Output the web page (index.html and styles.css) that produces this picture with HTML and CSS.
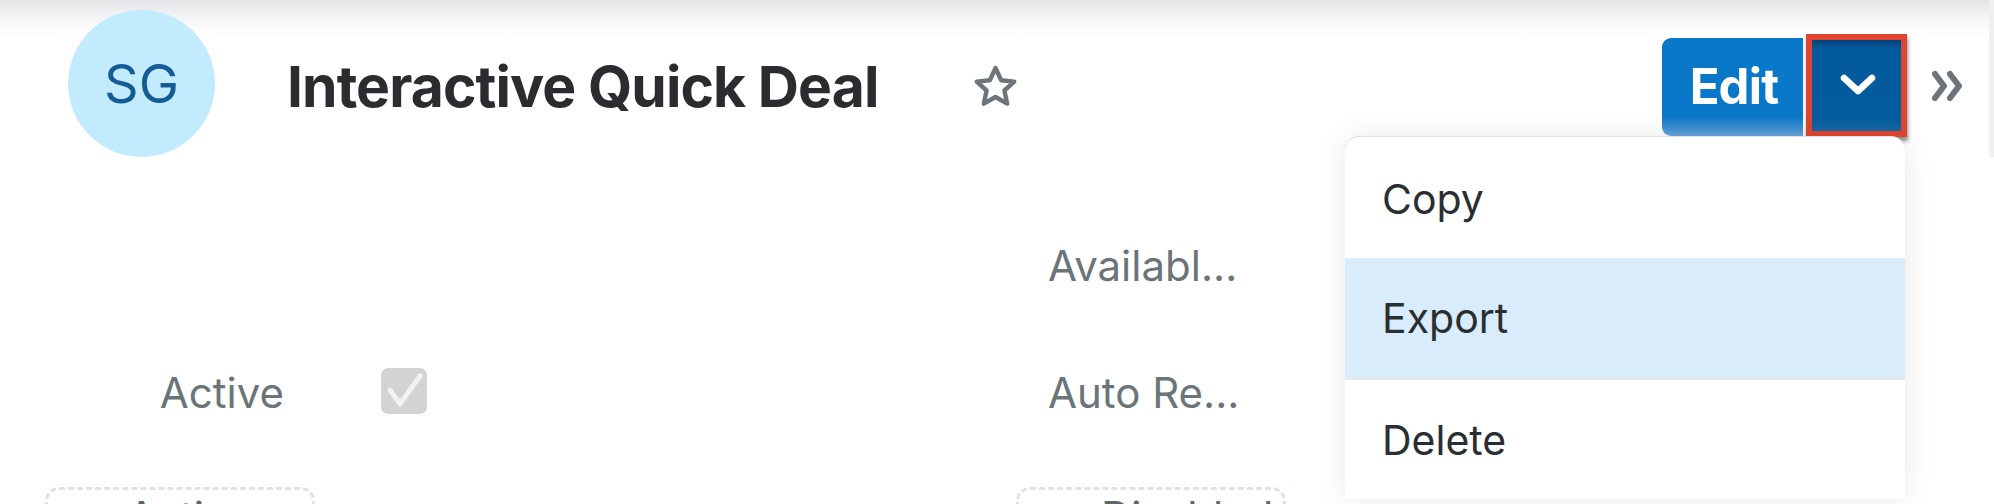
FILE: index.html
```html
<!DOCTYPE html>
<html lang="en">
<head>
<meta charset="utf-8">
<title>Interactive Quick Deal</title>
<link rel="stylesheet" href="styles.css">
</head>
<body>
<div class="page">
  <header class="record-header">
    <div class="avatar">SG</div>
    <h1 class="title">Interactive Quick Deal</h1>
    <button class="fav" aria-label="Favorite">
      <svg width="45" height="43" viewBox="0 0 45 43"><path d="M22.5 3 L28.1 15.2 L41.3 16.6 L31.4 25.5 L34.2 38.6 L22.5 32 L10.8 38.6 L13.6 25.5 L3.7 16.6 L16.9 15.2 Z" fill="none" stroke="#6c757a" stroke-width="4.4" stroke-linejoin="round"/></svg>
    </button>
    <div class="actions">
      <div class="btn-group">
        <button class="btn-edit">Edit</button>
        <button class="btn-toggle" aria-label="More actions">
          <svg width="36" height="22" viewBox="0 0 36 22"><polyline points="4,4 18,17 32,4" fill="none" stroke="#fff" stroke-width="6.5" stroke-linecap="round" stroke-linejoin="round"/></svg>
        </button>
        <ul class="menu">
          <li class="menu-item">Copy</li>
          <li class="menu-item is-active">Export</li>
          <li class="menu-item">Delete</li>
        </ul>
      </div>
      <button class="btn-expand" aria-label="Expand">
        <svg width="34" height="32" viewBox="0 0 34 32"><path d="M4 4 L13 16 L4 28 M19 4 L28 16 L19 28" fill="none" stroke="#6c757a" stroke-width="6" stroke-linecap="round" stroke-linejoin="round"/></svg>
      </button>
    </div>
  </header>

  <section class="fields">
    <div class="field"></div>
    <div class="field"><span class="label">Availabl...</span></div>
    <div class="field">
      <span class="label">Active</span>
      <span class="checkbox">
        <svg width="46" height="46" viewBox="0 0 46 46"><path d="M9 22 L19 36 L39 8" fill="none" stroke="#f1f1f1" stroke-width="5" stroke-linecap="round" stroke-linejoin="round"/></svg>
      </span>
    </div>
    <div class="field"><span class="label">Auto Re...</span></div>
  </section>

  <section class="pills">
    <div class="pill">Active</div>
    <div class="pill">Disabled</div>
  </section>
</div>
</body>
</html>
```

FILE: styles.css
```css
* { box-sizing: border-box; }

html, body {
  margin: 0;
  padding: 0;
}

body {
  font-family: Inter, "Noto Sans", sans-serif;
  background: #fff;
  overflow: hidden;
}

.page {
  height: 504px;
  overflow: hidden;
  background: linear-gradient(#e3e4e6 0, #f3f4f5 16px, #fcfcfc 30px, #fff 38px);
}

/* ---------- header ---------- */
.record-header {
  display: flex;
  align-items: center;
  height: 157px;
  padding: 10px 24px 0 68px;
  border-right: 5px solid #eff0f1;
}

.avatar {
  width: 147px;
  height: 147px;
  flex: none;
  border-radius: 50%;
  background: #c2ebfd;
  color: #155c97;
  font-size: 54px;
  font-weight: 400;
  display: flex;
  align-items: center;
  justify-content: center;
}

.title {
  margin: 5px 0 0 72px;
  font-size: 57px;
  font-weight: 700;
  letter-spacing: -0.9px;
  color: #2a2c2f;
  white-space: nowrap;
}

.fav {
  margin: 6px 0 0 95px;
  padding: 0;
  border: 0;
  background: none;
  display: flex;
}

.actions {
  margin-left: auto;
  margin-top: 4px;
  display: flex;
  align-items: center;
}

.btn-group {
  position: relative;
  display: flex;
  align-items: center;
}

.btn-edit {
  width: 141px;
  height: 98px;
  margin-top: 3px;
  border: 0;
  border-radius: 9px 0 0 9px;
  background: linear-gradient(#0a78c8 0, #0a78c8 80%, #3f8fd2 92%, #6aa8de 100%);
  color: #fff;
  font-family: inherit;
  font-size: 49px;
  font-weight: 700;
  letter-spacing: -0.8px;
  padding: 0 0 2px 3px;
}

.btn-toggle {
  width: 101px;
  height: 103px;
  margin-left: 3px;
  border: 6px solid #df4530;
  background: linear-gradient(#00427a 0, #035a9c 9px, #035c9e 85%, #1766a6 100%);
  box-shadow: 1px 4px 4px rgba(0, 0, 0, 0.45);
  display: flex;
  align-items: center;
  justify-content: center;
  padding: 0 0 2px 2px;
}

.btn-expand {
  margin-left: 24px;
  padding: 0;
  border: 0;
  background: none;
  display: flex;
}

/* ---------- dropdown menu ---------- */
.menu {
  position: absolute;
  top: 100%;
  right: 2px;
  width: 560px;
  margin: 0;
  padding: 2px 0 0;
  list-style: none;
  background: #fff;
  border-radius: 14px 14px 0 0;
  box-shadow: 0 -1px 0 #dde1e5, 0 0 30px rgba(0, 0, 0, 0.09);
  z-index: 2;
}

.menu-item {
  height: 119px;
  display: flex;
  align-items: center;
  padding-left: 37px;
  font-size: 41px;
  color: #2b2e31;
}

.menu-item.is-active {
  background: #d8ecfb;
  border-bottom: 3px solid #e4e9ec;
  height: 122px;
}

/* ---------- fields ---------- */
.fields {
  display: grid;
  grid-template-columns: 956px 956px;
  grid-auto-rows: 127px;
  padding-left: 92px;
  margin-top: 45px;
}

.field {
  display: flex;
  align-items: center;
}

.label {
  width: 192px;
  text-align: right;
  font-size: 42px;
  color: #6b7479;
  white-space: nowrap;
}

.fields .field:nth-child(even) .label {
  text-align: left;
  padding-left: 0;
}

.checkbox {
  width: 46px;
  height: 46px;
  margin-left: 97px;
  margin-top: -3px;
  border-radius: 7px;
  background: #d3d3d3;
  display: flex;
}

/* ---------- bottom pills ---------- */
.pills {
  display: grid;
  grid-template-columns: 971px 271px;
  padding-left: 45px;
  margin-top: 31px;
}

.pill {
  width: 270px;
  height: 80px;
  border: 3px dashed #dfe3e6;
  border-radius: 14px;
  padding: 2px 0 0 79px;
  font-size: 42px;
  color: #5d666b;
  line-height: 1.2;
}

.pill + .pill {
  padding-left: 82px;
}
```
